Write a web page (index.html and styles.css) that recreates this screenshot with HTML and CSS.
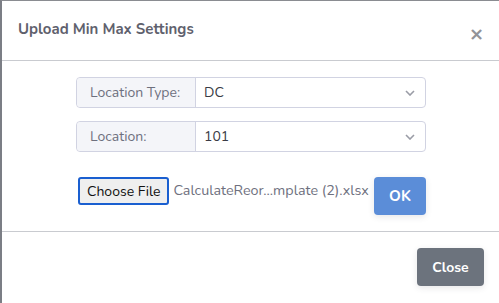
FILE: index.html
```html
<!DOCTYPE html>
<html lang="en">
<head>
  <meta charset="UTF-8">
  <title>Upload Min Max Settings</title>
  <link rel="stylesheet" href="styles.css">
</head>
<body>

<div class="modal">

  <div class="modal-header">
    <h5 class="modal-title">Upload Min Max Settings</h5>
    <button class="close" type="button">&times;</button>
  </div>

  <div class="modal-body">
    <div class="upload-form">

      <div class="input-group">
        <span class="input-group-text">Location Type:</span>
        <div class="select">
          <span>DC</span>
          <svg class="chevron" width="10" height="6" viewBox="0 0 10 6"><path d="M1 1l4 4 4-4" fill="none" stroke="#9a9ca6" stroke-width="1.6"/></svg>
        </div>
      </div>

      <div class="input-group">
        <span class="input-group-text">Location:</span>
        <div class="select">
          <span>101</span>
          <svg class="chevron" width="10" height="6" viewBox="0 0 10 6"><path d="M1 1l4 4 4-4" fill="none" stroke="#9a9ca6" stroke-width="1.6"/></svg>
        </div>
      </div>

      <div class="file-row">
        <button class="choose-file" type="button">Choose File</button>
        <span class="file-name">CalculateReor...mplate (2).xlsx</span>
        <button class="btn btn-primary" type="button">OK</button>
      </div>

    </div>
  </div>

  <div class="modal-footer">
    <button class="btn btn-secondary" type="button">Close</button>
  </div>

</div>

</body>
</html>
```

FILE: styles.css
```css
html, body {
  margin: 0;
  height: 100%;
}
body {
  font-family: 'Nunito', 'Lato', 'Open Sans', sans-serif;
  background: #fff;
  color: #858796;
}
.modal {
  box-sizing: border-box;
  height: 100%;
  border-left: 2px solid #7b7e85;
  border-top: 1px solid #8a8c91;
  display: flex;
  flex-direction: column;
}
.modal-header {
  display: flex;
  justify-content: space-between;
  align-items: flex-start;
  height: 60px;
  box-sizing: border-box;
  padding: 16px 15px 0 16px;
  border-bottom: 1px solid #c9cbd0;
}
.modal-title {
  margin: 0;
  font-size: 15px;
  line-height: 24px;
  font-weight: 700;
  color: #5f616d;
}
.close {
  background: none;
  border: 0;
  padding: 0;
  margin-top: 8px;
  font-family: 'DejaVu Sans', sans-serif;
  font-size: 18px;
  line-height: 18px;
  font-weight: 700;
  color: #929398;
}
.modal-body {
  height: 171px;
  box-sizing: border-box;
  padding: 16px 0 0 74px;
  border-bottom: 1px solid #c9cbd0;
}
.upload-form {
  width: 350px;
}
.input-group {
  display: flex;
  height: 31px;
  box-sizing: border-box;
  border: 1px solid #d1d3e2;
  border-radius: 4px;
  margin-bottom: 13px;
  font-size: 14px;
}
.input-group-text {
  width: 119px;
  box-sizing: border-box;
  display: flex;
  align-items: center;
  padding-left: 13px;
  background: #f4f5f9;
  border-right: 1px solid #d1d3e2;
  border-radius: 4px 0 0 4px;
  color: #6e707e;
}
.select {
  flex: 1;
  display: flex;
  align-items: center;
  justify-content: space-between;
  padding: 0 10px 0 8px;
  color: #3a3b45;
}
.file-row {
  display: flex;
  align-items: flex-start;
  margin-top: 25px;
  padding-left: 2px;
}
.choose-file {
  flex-shrink: 0;
  height: 28px;
  box-sizing: border-box;
  padding: 0 7px;
  background: #efefef;
  border: 2px solid #1a5fd0;
  border-radius: 3px;
  font-family: 'Nunito', 'Lato', 'Open Sans', sans-serif;
  font-size: 14px;
  white-space: nowrap;
  color: #111;
}
.file-name {
  margin-left: 4px;
  line-height: 28px;
  font-size: 14.3px;
  color: #6e707e;
  flex: 1;
  white-space: nowrap;
}
.btn {
  flex-shrink: 0;
  height: 38px;
  box-sizing: border-box;
  border: 0;
  border-radius: 4px;
  font-family: 'Nunito', 'Lato', 'Open Sans', sans-serif;
  font-size: 14px;
  font-weight: 700;
  color: #fff;
  box-shadow: 0 2px 6px rgba(58, 59, 69, 0.12);
}
.btn-primary {
  width: 52px;
  font-size: 15px;
  background: #5b8dd8;
}
.modal-footer {
  display: flex;
  justify-content: flex-end;
  padding: 16px 15px 0 0;
}
.btn-secondary {
  width: 67px;
  background: #6c737d;
}
```
